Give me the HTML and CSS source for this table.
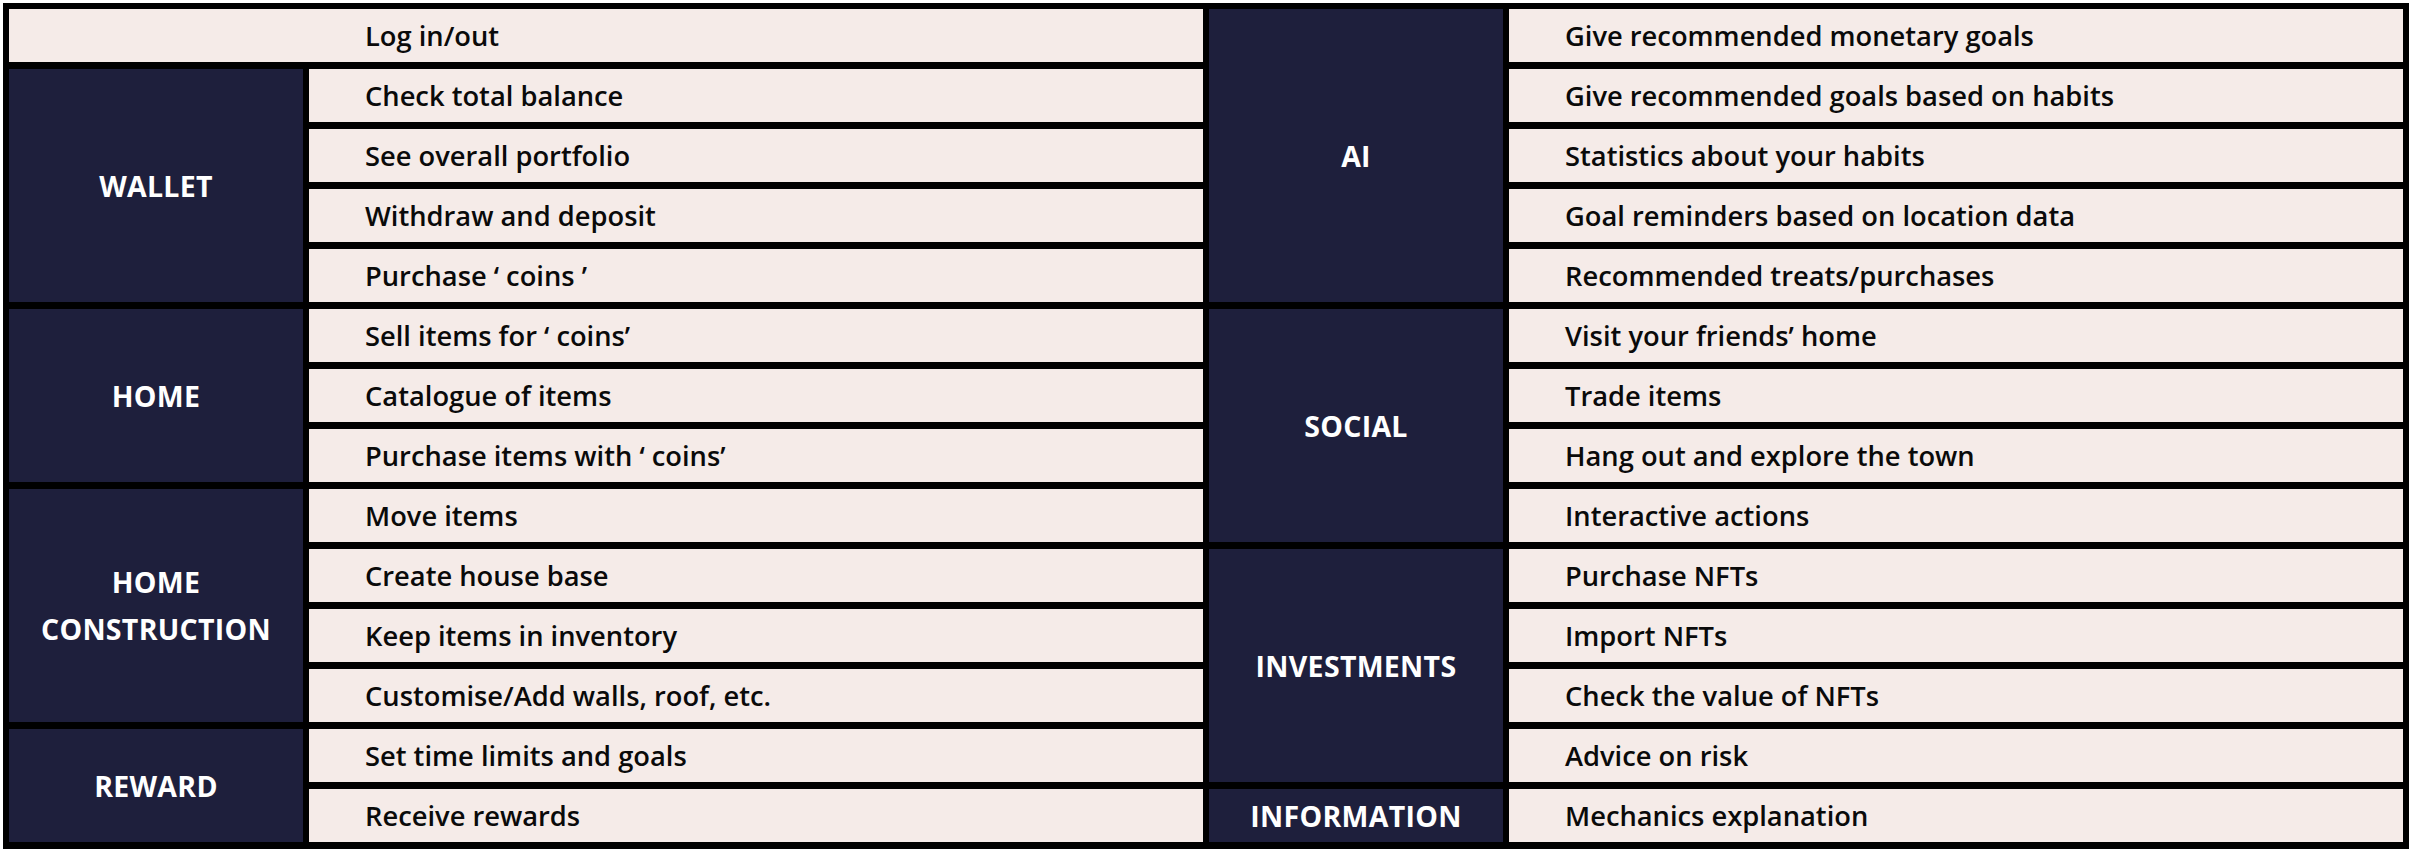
FILE: index.html
```html
<!DOCTYPE html>
<html lang="en">
<head>
<meta charset="utf-8">
<title>Features</title>
<link rel="stylesheet" href="styles.css">
</head>
<body>
<main class="board">
  <section class="half">
    <div class="cell item full">Log in/out</div>

    <div class="cell label span-4">WALLET</div>
    <div class="cell item">Check total balance</div>
    <div class="cell item">See overall portfolio</div>
    <div class="cell item">Withdraw and deposit</div>
    <div class="cell item">Purchase ‘ coins ’</div>

    <div class="cell label span-3">HOME</div>
    <div class="cell item">Sell items for ‘ coins’</div>
    <div class="cell item">Catalogue of items</div>
    <div class="cell item">Purchase items with ‘ coins’</div>

    <div class="cell label span-4 two-line">HOME<br>CONSTRUCTION</div>
    <div class="cell item">Move items</div>
    <div class="cell item">Create house base</div>
    <div class="cell item">Keep items in inventory</div>
    <div class="cell item">Customise/Add walls, roof, etc.</div>

    <div class="cell label span-2">REWARD</div>
    <div class="cell item">Set time limits and goals</div>
    <div class="cell item">Receive rewards</div>
  </section>

  <section class="half">
    <div class="cell label span-5">AI</div>
    <div class="cell item">Give recommended monetary goals</div>
    <div class="cell item">Give recommended goals based on habits</div>
    <div class="cell item">Statistics about your habits</div>
    <div class="cell item">Goal reminders based on location data</div>
    <div class="cell item">Recommended treats/purchases</div>

    <div class="cell label span-4">SOCIAL</div>
    <div class="cell item">Visit your friends’ home</div>
    <div class="cell item">Trade items</div>
    <div class="cell item">Hang out and explore the town</div>
    <div class="cell item">Interactive actions</div>

    <div class="cell label span-4">INVESTMENTS</div>
    <div class="cell item">Purchase NFTs</div>
    <div class="cell item">Import NFTs</div>
    <div class="cell item">Check the value of NFTs</div>
    <div class="cell item">Advice on risk</div>

    <div class="cell label span-1">INFORMATION</div>
    <div class="cell item">Mechanics explanation</div>
  </section>
</main>
</body>
</html>
```

FILE: styles.css
```css
html, body {
  margin: 0;
  padding: 0;
  background: #ffffff;
}

body {
  padding: 3px;
  font-family: "Open Sans", "Noto Sans", sans-serif;
}

.board {
  display: flex;
  gap: 6px;
  background: #000000;
  padding: 6px 6px 7px 6px;
}

.half {
  flex: 1 1 0;
  display: grid;
  grid-template-columns: 294px 1fr;
  grid-template-rows: repeat(14, 53px);
  column-gap: 6px;
  row-gap: 7px;
}

.cell {
  display: flex;
  align-items: center;
  min-width: 0;
}

.item {
  grid-column: 2;
  background: #f5ebe8;
  color: #0a0a0a;
  font-size: 27.3px;
  font-weight: 600;
  padding-left: 56px;
  white-space: nowrap;
}

.item.full {
  grid-column: 1 / -1;
  padding-left: 356px;
}

.label {
  grid-column: 1;
  background: #1e1f3c;
  color: #ffffff;
  font-size: 28.5px;
  font-weight: 700;
  justify-content: center;
  text-align: center;
  letter-spacing: 0.3px;
}

.two-line {
  line-height: 47px;
}

.span-1 { grid-row: span 1; }
.span-2 { grid-row: span 2; }
.span-3 { grid-row: span 3; }
.span-4 { grid-row: span 4; }
.span-5 { grid-row: span 5; }
```
